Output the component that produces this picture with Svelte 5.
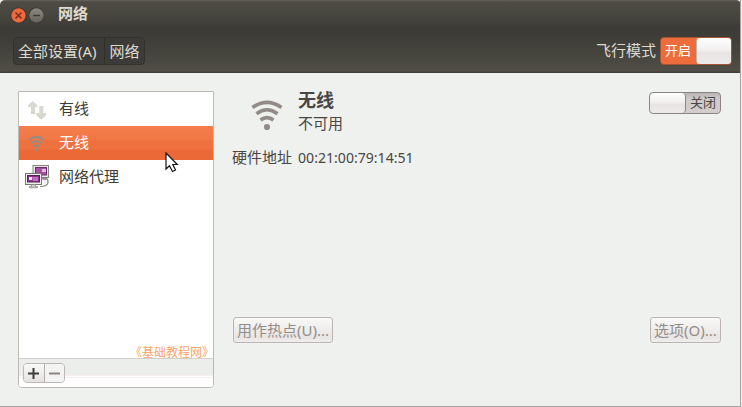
<script>
  let selected = $state('无线');
  const rows = ['有线', '无线', '网络代理'];
</script>

<div class="window">
  <header>
    <div class="titlebar">
      <svg class="winbtn" width="17" height="17" viewBox="0 0 17 17"><circle cx="8.5" cy="8.5" r="8" fill="#35332f"/><circle cx="8.5" cy="8.5" r="7.2" fill="#f0693c"/><path d="M5.5 5.5l6 6M11.5 5.5l-6 6" stroke="#763019" stroke-width="1.5"/></svg>
      <svg class="winbtn" width="17" height="17" viewBox="0 0 17 17"><defs><linearGradient id="minGrad" x2="0" y2="1"><stop stop-color="#8d8980"/><stop offset="1" stop-color="#65625b"/></linearGradient></defs><circle cx="8.5" cy="8.5" r="8" fill="#383631"/><circle cx="8.5" cy="8.5" r="7.2" fill="url(#minGrad)"/><path d="M5 8.5h7" stroke="#3b3935" stroke-width="1.4"/></svg>
      <b>网络</b>
    </div>
    <div class="toolbar">
      <nav><button class="crumb all">全部设置<span class="lat">(A)</span></button><button class="crumb">网络</button></nav>
      <span class="flight">飞行模式</span>
      <div class="switch on"><span>开启</span><i></i></div>
    </div>
  </header>

  <main>
    <section class="side">
      <ul>
        {#each rows as row, i}
          <li class:selected={selected === row}>
            <span class="icon">
              {#if i === 0}
                <svg width="24" height="24" viewBox="0 0 24 24"><path d="M8.700 4l4.800 4.500V10H11v6.500H7V10H4V8.500zM15.300 9h4v7H22v1.500L17.300 22l-5-4.500V16h3z" fill="#d9d9d1"/><path d="M7 16h4M12.500 17.500l4.800 4.300 4.700-4.300" fill="none" stroke="#c6c6bd"/></svg>
              {:else if i === 1}
                <svg width="24" height="24" viewBox="0 0 24 24" fill="none" stroke="#948d85" stroke-width="2.1"><path d="M5 9Q12.500 2.800 20 9M7 12.400Q12.500 8.100 18 12.400M9.300 15.600Q12.500 13.300 15.700 15.600"/><circle cx="12.500" cy="18.700" r="1.700" fill="#948d85" stroke="none"/></svg>
              {:else}
                <svg width="28" height="26" viewBox="0 0 28 26">
                  <path d="M19 13h3v3h-3z" fill="#999"/>
                  <rect x="9" y="1.500" width="15.500" height="12" fill="#e8e8e3" stroke="#85857e"/><rect x="11.500" y="3.500" width="11" height="7.500" fill="#a450a5" stroke="#6a2a6b"/><path d="M18 5h4v3h-4z" fill="#e2bae0"/>
                  <path d="M17.500 15.500c3-3 7-1 6.500 3s-5 4-8 4" fill="none" stroke="#85857e" stroke-width="1.200"/><path d="M19 16.500q3-2 3.500 1t-3.500 2z" fill="#eee"/>
                  <rect x="1.500" y="9.500" width="16" height="11" fill="#eeeeea" stroke="#777771"/><rect x="3.500" y="11.500" width="12" height="6.500" fill="#8c328e" stroke="#54205a"/><path d="M5 13h3v3H5z" fill="#f2dff1"/><path d="M8 13h6v4H9z" fill="#bc72bd"/>
                  <path d="M7.500 20.500h4v2h2v1.300h-8v-1.300h2z" fill="#ccc" stroke="#8b8b83" stroke-width=".8"/>
                </svg>
              {/if}
            </span>
            <span>{row}</span>
          </li>
        {/each}
      </ul>
      <div class="credit">《基础教程网》</div>
      <footer>
        <div class="addremove">
          <button class="add" aria-label="添加"><svg width="11" height="11" viewBox="0 0 11 11"><path d="M0 5.500h11M5.500 0v11" stroke="#3c3c3a" stroke-width="2"/></svg></button>
          <button class="remove" aria-label="移除"><svg width="11" height="11" viewBox="0 0 11 11"><path d="M0 5.500h11" stroke="#8e8581" stroke-width="2"/></svg></button>
        </div>
      </footer>
    </section>

    <section class="detail">
      <div class="heading">
        <svg class="wifi" width="34" height="34" viewBox="0 0 34 34" fill="none" stroke="#928b87" stroke-width="3.600"><path d="M2.500 9.500Q17 -.8 31.500 9.500M6.500 15.800Q17 7.700 27.500 15.800M10.500 22Q17 17.200 23.500 22"/><circle cx="17" cy="29" r="3.100" fill="#928b87" stroke="none"/></svg>
        <div class="names"><h1>无线</h1><p>不可用</p></div>
        <div class="switch off"><i></i><span>关闭</span></div>
      </div>
      <div class="address"><span>硬件地址</span><span class="mac">00:21:00:79:14:51</span></div>
      <div class="actions">
        <button class="hot">用作热点<span class="lat">(U)...</span></button>
        <button class="options">选项<span class="lat">(O)...</span></button>
      </div>
    </section>
  </main>
  <svg class="pointer" width="14" height="22" viewBox="0 0 14 22"><path d="M1 1v16l3.500-3.300L7.500 19.500l3-1.500-2.700-5.500h4.500z" fill="#fff" stroke="#111" stroke-width="1.200"/></svg>
</div>

<style>
  :global(body) { margin: 0; background: #f0f1ef; }
  * { box-sizing: border-box; }
  .window { position: relative; width: 741px; height: 407px; border-right: 1px solid #a7a3a3; border-bottom: 1px solid #a7a3a3; background: #eff1ee; color: #4a4643; font: 15px/20px "Noto Sans CJK SC", sans-serif; display: flex; flex-direction: column; overflow: hidden; }
  button { font: inherit; color: inherit; padding: 0; margin: 0; white-space: nowrap; }
  .lat, .mac { font-family: "Noto Sans", sans-serif; font-size: 14.1px; }
  .lat { font-size: 15px; }
  header { height: 73px; width: 741px; flex: none; background: linear-gradient(#64625a 0, #4d4b44 2px, #494840 12px, #3c3b37 28px, #3e3d38 38px, #45443d 53px, #504e46 71px, #3f3d38 72px); color: #dfdbd2; border-radius: 5px 5px 0 0; }
  .titlebar { height: 29px; display: flex; align-items: flex-start; padding: 7px 0 0 10px; }
  .winbtn { margin-right: 1px; }
  .titlebar b { margin: -4px 0 0 12px; font-size: 15px; line-height: 20px; }
  .toolbar { height: 43px; display: flex; align-items: flex-start; padding: 8px 9px 0 13px; }
  nav { display: flex; height: 28px; border: 1px solid #32312d; border-radius: 4px; background: #3c3b37; }
  .crumb { height: 26px; border: 0; background: none; width: 39px; line-height: 24px; }
  .crumb.all { width: 91px; border-right: 1px solid #302f2b; text-align: left; padding-left: 4px; }
  .flight { margin: 3px 4px 0 auto; }
  .switch { display: flex; align-items: stretch; border-radius: 4px; overflow: hidden; font-size: 13px; }
  .switch span { flex: 1; text-align: center; }
  .switch i { background: linear-gradient(#fff, #f0eeed 50%, #e8e4e3 55%, #eceaea); border-radius: 4px; }
  .on { width: 72px; height: 28px; border: 1px solid #a75332; background: #ec6c3b; color: #fff; }
  .on span { line-height: 24px; padding-right: 2px; }
  .on i { width: 36px; border: 1px solid #bdb3ae; margin: -1px; }
  .off { width: 72px; height: 22px; border: 1px solid #8d8583; background: linear-gradient(#bab5b3, #cecaca 30%, #d1cecc); margin: 0 0 0 auto; }
  .off i { width: 36px; border-right: 1px solid #8d8583; }
  .off span { line-height: 18px; }
  main { flex: 1; display: flex; padding: 18px 19px 0 18px; }
  .side { width: 196px; height: 297px; border: 1px solid #bdb8b4; border-radius: 0 0 4px 4px; background: #fff; display: flex; flex-direction: column; flex: none; }
  ul { list-style: none; padding: 0; margin: 0; flex: 1; }
  li { height: 34px; display: flex; align-items: center; line-height: 34px; color: #3c3b37; }
  li > span:last-child { margin-top: -3px; }
  .icon { width: 40px; height: 26px; display: flex; align-items: center; padding-left: 5px; flex: none; }
  .selected { color: #fff; background: linear-gradient(#f47c4b 0, #f27746 14px, #ef7140 14px, #ef7140 23px, #eb6937 24px, #eb6937); }
  .credit { display: flex; justify-content: flex-end; font-size: 12px; line-height: 18px; height: 15px; color: #f8a468; margin-right: -1px; white-space: nowrap; flex: none; }
  footer { height: 29px; padding: 4px; border-top: 1px solid #d2cecc; border-radius: 0 0 3px 3px; background: linear-gradient(#eceeec 0 16px, #f8eeee 16px 17px, #fff 17px 18px, #f8eeee 18px 19px, #fff 19px); flex: none; }
  .addremove { display: flex; width: 42px; height: 20px; border: 1px solid #bcb7b4; border-radius: 4px; background: #f1f0ef; overflow: hidden; }
  .addremove button { width: 20px; height: 18px; display: flex; align-items: center; justify-content: center; border: 0; background: linear-gradient(#fafafa, #e5e1e0); }
  .addremove .add { border-right: 1px solid #b4aeab; width: 21px; }
  .addremove .remove { background: #f2f3f2; }
  .detail { flex: 1; padding: 1px 0 0 19px; display: flex; flex-direction: column; }
  .heading { display: flex; align-items: flex-start; height: 47px; }
  .wifi { margin: 6px 0 0 17px; }
  .names { margin-left: 14px; }
  h1 { font-size: 18px; line-height: 22px; margin: -4px 0 0; }
  p { margin: 3px 0 0; line-height: 20px; }
  .address { display: flex; gap: 6px; margin: 8px 0 0 -1px; height: 20px; line-height: 20px; }
  .mac { padding-top: 1px; }
  .actions { margin: 150px 0 0; display: flex; justify-content: space-between; }
  .actions button { height: 26px; border: 1px solid #bbb3b1; border-radius: 3px; background: linear-gradient(#f9f9f8, #e9e5e4 80%, #efefed); color: #938d88; line-height: 22px; box-shadow: 0 0 0 1px #f3f3f1; text-align: left; padding-left: 3px; }
  .hot { width: 100px; }
  .options { width: 71px; }
  .pointer { position: absolute; left: 165px; top: 152px; }
</style>
